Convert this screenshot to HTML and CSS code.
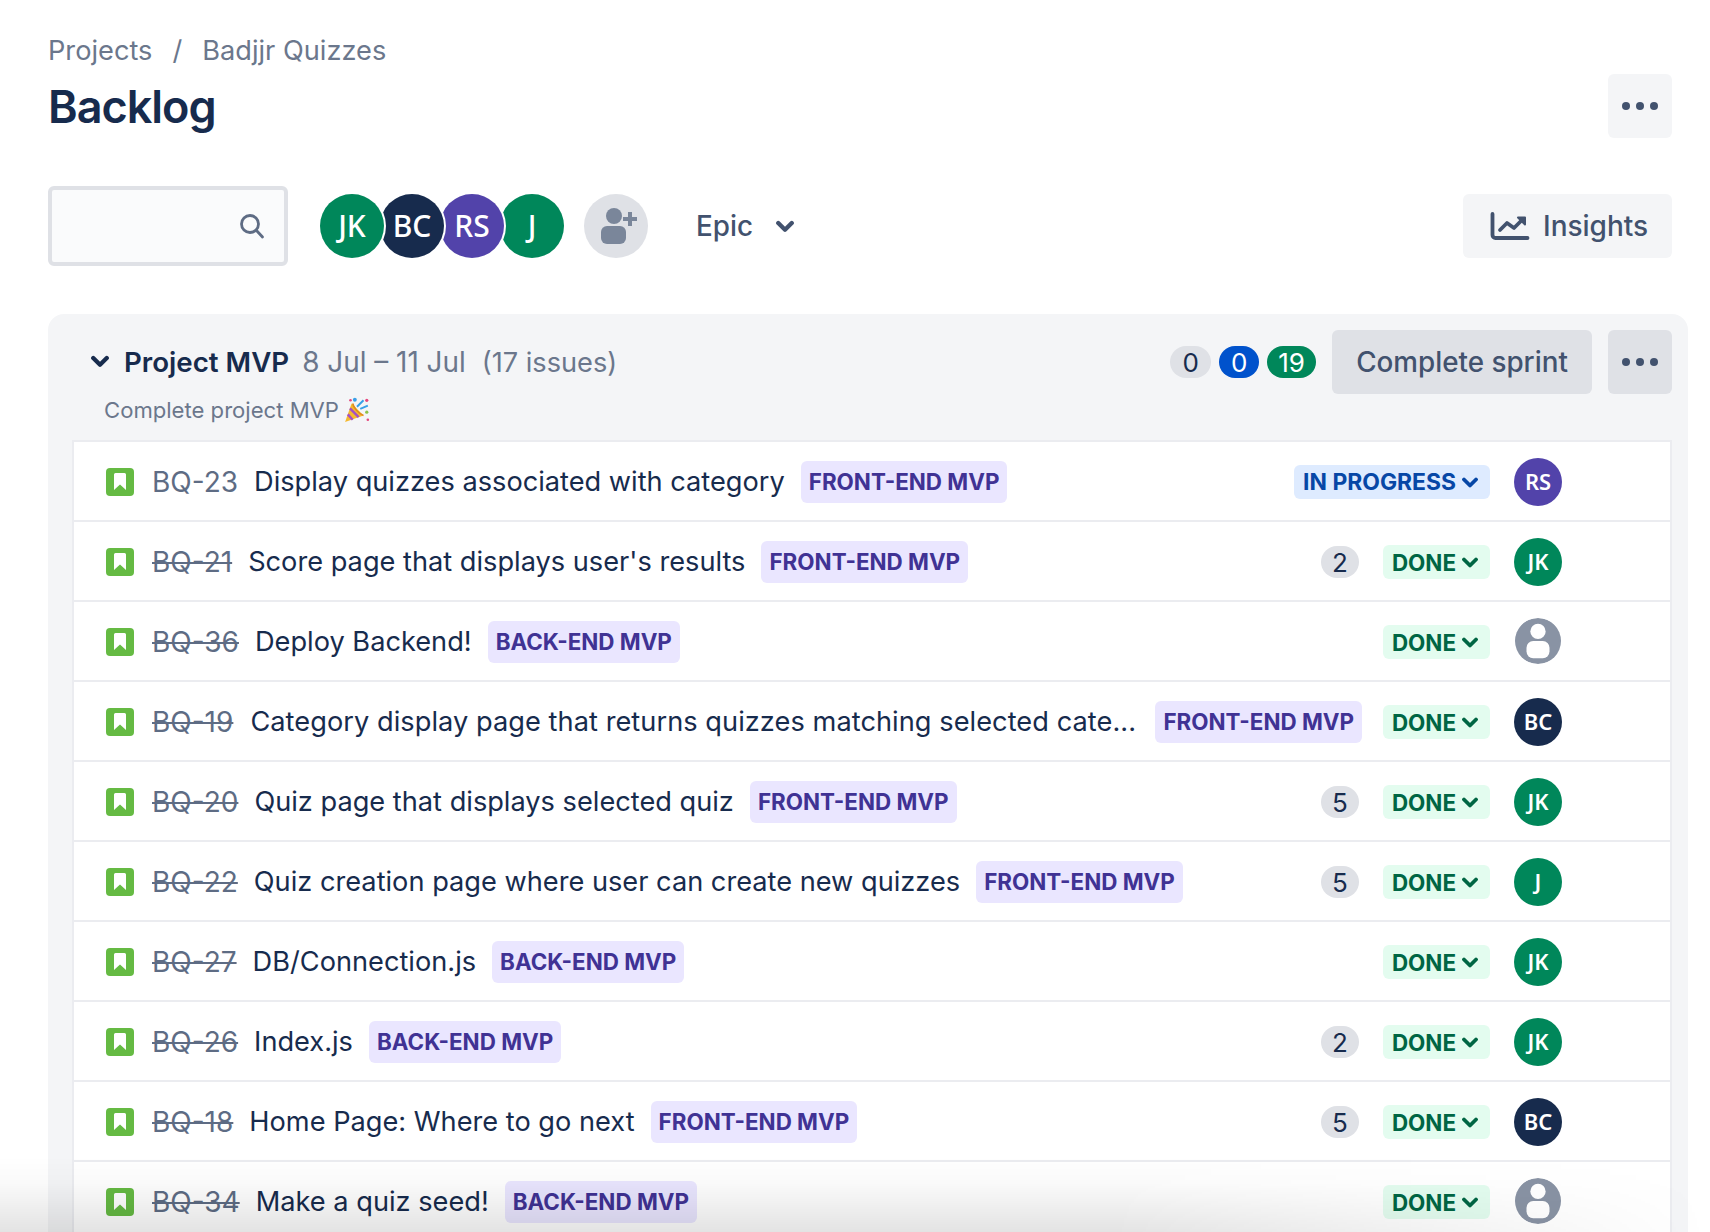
FILE: index.html
```html
<!DOCTYPE html>
<html lang="en">
<head>
    <meta charset="UTF-8">
    <title>Backlog - Badjjr Quizzes</title>
    <link rel="stylesheet" href="styles.css">
</head>
<body>

<svg class="defs" width="0" height="0">
    <symbol id="dots" viewBox="0 0 36 8"><circle cx="4" cy="4" r="4"/><circle cx="18" cy="4" r="4"/><circle cx="32" cy="4" r="4"/></symbol>
    <symbol id="story" viewBox="0 0 28 28"><rect width="28" height="28" rx="4" fill="#65ba43"/><path d="M9.5 5h9a1.5 1.5 0 0 1 1.500 1.500V22l-6-5.500L8 22V6.500A1.500 1.500 0 0 1 9.500 5z" fill="#fff"/></symbol>
    <symbol id="nobody" viewBox="0 0 48 48"><circle cx="24" cy="24" r="24" fill="#8993a4"/><circle cx="24" cy="14" r="8" fill="#fff"/><rect x="12" y="24" width="24" height="18" rx="7" fill="#fff"/></symbol>
    <symbol id="chev" viewBox="0 0 16 12"><path d="M2 2.500l6 6 6-6" fill="none" stroke="currentColor" stroke-width="3.800" stroke-linecap="round" stroke-linejoin="round"/></symbol>
</svg>

<header class="page-head">
    <nav class="crumbs"><span>Projects</span><span class="sep">/</span><span>Badjjr Quizzes</span></nav>
    <div class="title-row">
        <h1>Backlog</h1>
        <button class="btn btn-icon"><svg class="dots"><use href="#dots"/></svg></button>
    </div>
</header>

<div class="toolbar">
    <div class="search">
        <svg width="26" height="26" viewBox="0 0 26 26" fill="none" stroke="#5e6c84" stroke-width="2.800" stroke-linecap="round"><circle cx="11" cy="11" r="8.500"/><path d="M17.500 17.500l6 6.500"/></svg>
    </div>
    <div class="people">
        <span class="avatar-lg green">JK</span>
        <span class="avatar-lg navy">BC</span>
        <span class="avatar-lg purple">RS</span>
        <span class="avatar-lg green">J</span>
    </div>
    <span class="add-person">
        <svg width="64" height="64" viewBox="0 0 64 64" fill="#7a869a"><circle cx="30" cy="22" r="8"/><rect x="17" y="32" width="25" height="18" rx="6"/><path d="M44 18h4v5h5v4h-5v5h-4v-5h-5v-4h5z"/></svg>
    </span>
    <span class="epic">Epic <svg class="epic-chev"><use href="#chev"/></svg></span>
    <button class="btn btn-insights">
        <svg width="40" height="30" viewBox="0 0 40 30" fill="none" stroke="#42526e" stroke-width="3.800" stroke-linecap="round" stroke-linejoin="round"><path d="M2.500 3v21a3 3 0 0 0 3 3h32"/><path d="M10 19l7-7 7 5 9-9"/><path d="M28 6.500h7v7z" fill="#42526e" stroke-width="2"/></svg>
        Insights
    </button>
</div>

<section class="sprint">
    <div class="sprint-head">
        <svg class="sprint-chev"><use href="#chev"/></svg>
        <span class="sprint-name">Project MVP</span>
        <span class="sprint-dates sprint-range">8 Jul – 11 Jul</span>
        <span class="sprint-dates">(17 issues)</span>
        <div class="sprint-actions">
            <span class="pill">0</span>
            <span class="pill pill-blue">0</span>
            <span class="pill pill-green">19</span>
            <button class="btn btn-dark btn-complete">Complete sprint</button>
            <button class="btn btn-dark btn-icon"><svg class="dots"><use href="#dots"/></svg></button>
        </div>
    </div>
    <p class="goal">Complete project MVP
        <svg width="26" height="26" viewBox="0 0 24 24">
            <path d="M1 23L7 6l11 11z" fill="#f5b92e"/>
            <path d="M3.500 16l4.500 5M5.500 10.500l8 8" stroke="#a44fc4" stroke-width="2.200"/>
            <path d="M8 6c1 4 5 9 10 11" stroke="#e08a1e" stroke-width="1.500" fill="none"/>
            <path d="M12 9l6-6M15 11l7-3" stroke="#39a0e8" stroke-width="1.800"/>
            <circle cx="10" cy="2.500" r="1.800" fill="#39a0e8"/><circle cx="21" cy="3" r="1.500" fill="#e5487d"/>
            <circle cx="6" cy="3" r="1.200" fill="#e5487d"/><circle cx="21" cy="14" r="1.500" fill="#8bc34a"/><circle cx="22" cy="21" r="1.200" fill="#e5487d"/>
        </svg>
    </p>

    <div class="issues">
        <div class="issue">
            <svg class="story"><use href="#story"/></svg>
            <span class="key">BQ-23</span>
            <span class="summary">Display quizzes associated with category</span>
            <span class="epic-tag">FRONT-END MVP</span>
            <span class="status status-progress">IN PROGRESS <svg class="status-chev"><use href="#chev"/></svg></span>
            <span class="avatar purple">RS</span>
        </div>
        <div class="issue">
            <svg class="story"><use href="#story"/></svg>
            <span class="key done">BQ-21</span>
            <span class="summary">Score page that displays user's results</span>
            <span class="epic-tag">FRONT-END MVP</span>
            <span class="pill points">2</span>
            <span class="status">DONE <svg class="status-chev"><use href="#chev"/></svg></span>
            <span class="avatar green">JK</span>
        </div>
        <div class="issue">
            <svg class="story"><use href="#story"/></svg>
            <span class="key done">BQ-36</span>
            <span class="summary">Deploy Backend!</span>
            <span class="epic-tag">BACK-END MVP</span>
            <span class="status">DONE <svg class="status-chev"><use href="#chev"/></svg></span>
            <svg class="avatar"><use href="#nobody"/></svg>
        </div>
        <div class="issue">
            <svg class="story"><use href="#story"/></svg>
            <span class="key done">BQ-19</span>
            <span class="summary summary-cut">Category display page that returns quizzes matching selected cate...</span>
            <span class="epic-tag">FRONT-END MVP</span>
            <span class="status">DONE <svg class="status-chev"><use href="#chev"/></svg></span>
            <span class="avatar navy">BC</span>
        </div>
        <div class="issue">
            <svg class="story"><use href="#story"/></svg>
            <span class="key done">BQ-20</span>
            <span class="summary">Quiz page that displays selected quiz</span>
            <span class="epic-tag">FRONT-END MVP</span>
            <span class="pill points">5</span>
            <span class="status">DONE <svg class="status-chev"><use href="#chev"/></svg></span>
            <span class="avatar green">JK</span>
        </div>
        <div class="issue">
            <svg class="story"><use href="#story"/></svg>
            <span class="key done">BQ-22</span>
            <span class="summary">Quiz creation page where user can create new quizzes</span>
            <span class="epic-tag">FRONT-END MVP</span>
            <span class="pill points">5</span>
            <span class="status">DONE <svg class="status-chev"><use href="#chev"/></svg></span>
            <span class="avatar green">J</span>
        </div>
        <div class="issue">
            <svg class="story"><use href="#story"/></svg>
            <span class="key done">BQ-27</span>
            <span class="summary">DB/Connection.js</span>
            <span class="epic-tag">BACK-END MVP</span>
            <span class="status">DONE <svg class="status-chev"><use href="#chev"/></svg></span>
            <span class="avatar green">JK</span>
        </div>
        <div class="issue">
            <svg class="story"><use href="#story"/></svg>
            <span class="key done">BQ-26</span>
            <span class="summary">Index.js</span>
            <span class="epic-tag">BACK-END MVP</span>
            <span class="pill points">2</span>
            <span class="status">DONE <svg class="status-chev"><use href="#chev"/></svg></span>
            <span class="avatar green">JK</span>
        </div>
        <div class="issue">
            <svg class="story"><use href="#story"/></svg>
            <span class="key done">BQ-18</span>
            <span class="summary">Home Page: Where to go next</span>
            <span class="epic-tag">FRONT-END MVP</span>
            <span class="pill points">5</span>
            <span class="status">DONE <svg class="status-chev"><use href="#chev"/></svg></span>
            <span class="avatar navy">BC</span>
        </div>
        <div class="issue">
            <svg class="story"><use href="#story"/></svg>
            <span class="key done">BQ-34</span>
            <span class="summary">Make a quiz seed!</span>
            <span class="epic-tag">BACK-END MVP</span>
            <span class="status">DONE <svg class="status-chev"><use href="#chev"/></svg></span>
            <svg class="avatar"><use href="#nobody"/></svg>
        </div>
    </div>
</section>

<div class="fade"></div>

</body>
</html>
```

FILE: styles.css
```css
* {
    box-sizing: border-box;
}

html, body {
    height: 1232px;
    overflow: hidden;
}

body {
    margin: 0;
    padding: 35px 22px 0 48px;
    font-family: 'Inter', 'Liberation Sans', sans-serif;
    font-size: 27.2px;
    color: #172b4d;
    background-color: #fff;
    position: relative;
}

.defs {
    position: absolute;
}

button {
    font: inherit;
    border: 0;
    cursor: pointer;
}

/* page head */
.page-head {
    padding-right: 16px;
}

.crumbs {
    display: flex;
    gap: 20px;
    height: 32px;
    line-height: 32px;
    color: #6b778c;
}

.sep {
    color: #6b778c;
}

.title-row {
    display: flex;
    justify-content: space-between;
    align-items: center;
    margin-top: 7px;
    height: 64px;
}

h1 {
    margin: 2px 0 0;
    font-size: 45px;
    font-weight: 600;
    letter-spacing: -1px;
    line-height: 62px;
}

.btn {
    display: flex;
    align-items: center;
    justify-content: center;
    height: 64px;
    border-radius: 6px;
    background-color: #f4f5f7;
    color: #42526e;
    font-size: 27.8px;
}

.btn-icon {
    width: 64px;
    padding: 0;
}

.btn-dark {
    background-color: #dfe1e6;
}

.dots {
    width: 36px;
    height: 8px;
    fill: #42526e;
}

/* toolbar */
.toolbar {
    display: flex;
    align-items: center;
    height: 80px;
    margin-top: 48px;
    padding-right: 16px;
}

.search {
    display: flex;
    align-items: center;
    justify-content: flex-end;
    width: 240px;
    height: 80px;
    padding-right: 19px;
    background-color: #fafbfc;
    border: 4px solid #dfe1e6;
    border-radius: 6px;
}

.people {
    display: flex;
    margin-left: 32px;
}

.avatar-lg {
    display: flex;
    align-items: center;
    justify-content: center;
    width: 64px;
    height: 64px;
    padding-bottom: 2px;
    border-radius: 50%;
    font-family: 'Noto Sans', sans-serif;
    font-size: 30px;
    font-weight: 500;
    color: #fff;
    position: relative;
}

.avatar-lg + .avatar-lg {
    margin-left: -4px;
}

.avatar-lg:nth-child(1) { z-index: 4; box-shadow: 0 0 0 2px #fff; }
.avatar-lg:nth-child(2) { z-index: 3; box-shadow: 0 0 0 2px #fff; }
.avatar-lg:nth-child(3) { z-index: 2; box-shadow: 0 0 0 2px #fff; }
.avatar-lg:nth-child(4) { z-index: 1; }

.green { background-color: #00875a; }
.navy { background-color: #172b4d; }
.purple { background-color: #5243aa; }

.add-person {
    width: 64px;
    height: 64px;
    margin-left: 20px;
    border-radius: 50%;
    background-color: #dfe1e6;
}

.epic {
    display: flex;
    align-items: center;
    margin-left: 48px;
    color: #42526e;
    gap: 23px;
    font-size: 27.8px;
    font-weight: 500;
}

.epic-chev {
    width: 18px;
    height: 14px;
    margin-top: 2px;
    color: #42526e;
}

.btn-insights {
    margin-left: auto;
    width: 209px;
    padding-left: 27px;
    justify-content: flex-start;
    gap: 13px;
    font-size: 28px;
    font-weight: 500;
}

/* sprint */
.sprint {
    margin-top: 48px;
    height: 1000px;
    padding: 16px 16px 0 24px;
    background-color: #f4f5f7;
    border-radius: 16px 16px 0 0;
}

.sprint-head {
    display: flex;
    align-items: center;
    height: 64px;
    padding-left: 19px;
}

.sprint-chev {
    width: 18px;
    height: 14px;
    color: #172b4d;
    margin-right: 15px;
}

.sprint-name {
    font-size: 27.7px;
    font-weight: 600;
    margin-right: 13px;
}

.sprint-dates {
    color: #6b778c;
    margin-right: 16px;
}

.sprint-range {
    font-size: 27.9px;
}

.sprint-actions {
    display: flex;
    align-items: center;
    margin-left: auto;
    gap: 8px;
}

.pill {
    min-width: 40px;
    height: 32px;
    padding: 0 12px;
    border-radius: 16px;
    background-color: #dfe1e6;
    color: #172b4d;
    font-size: 26px;
    line-height: 33px;
    text-align: center;
}

.pill-blue {
    background-color: #0052cc;
    color: #fff;
}

.pill-green {
    background-color: #00875a;
    color: #fff;
    margin-right: 8px;
    padding: 0 11px;
}

.btn-complete {
    width: 260px;
    font-weight: 500;
    margin-right: 8px;
}

.goal {
    display: flex;
    align-items: center;
    gap: 5px;
    margin: 0 0 14px 32px;
    height: 32px;
    font-size: 22.1px;
    color: #6b778c;
}

.issues {
    border: 2px solid #ebecf0;
    border-bottom: 0;
    background-color: #fff;
}

.issue {
    display: flex;
    align-items: center;
    height: 80px;
    padding: 2px 108px 0 32px;
    border-bottom: 2px solid #ebecf0;
}

.story {
    flex: none;
    width: 28px;
    height: 28px;
    margin-right: 18px;
}

.key {
    color: #5e6c84;
    font-size: 28px;
    margin: 0 16px 1px 0;
}

.key.done {
    text-decoration: line-through;
}

.summary {
    white-space: nowrap;
    margin: 0 16px 1px 0;
}

.summary-cut {
    width: 885px;
    margin-left: 1px;
    margin-right: 20px;
    letter-spacing: 0.05px;
}

.epic-tag {
    height: 42px;
    line-height: 42px;
    padding: 0 8px;
    border-radius: 6px;
    background-color: #eae6ff;
    color: #403294;
    font-size: 22.4px;
    font-weight: 700;
    white-space: nowrap;
}

.points {
    width: 38px;
    min-width: 38px;
    padding: 0;
    margin-left: auto;
}

.status {
    display: flex;
    align-items: center;
    gap: 6px;
    height: 34px;
    padding: 0 12px 0 9px;
    border-radius: 6px;
    background-color: #e3fcef;
    color: #006644;
    font-size: 22.4px;
    font-weight: 700;
    white-space: nowrap;
    margin-left: 24px;
}

.epic-tag + .status {
    margin-left: auto;
}

.status-progress {
    background-color: #deebff;
    color: #0747a6;
    font-size: 22.9px;
}

.status-chev {
    width: 16px;
    height: 12px;
    margin-top: 2px;
}

.avatar {
    flex: none;
    display: flex;
    align-items: center;
    justify-content: center;
    width: 48px;
    height: 48px;
    margin-left: 24px;
    padding-bottom: 2px;
    border-radius: 50%;
    font-family: 'Noto Sans', sans-serif;
    font-size: 22px;
    font-weight: 600;
    color: #fff;
}

/* shadow along the bottom of the window, gone by the right edge */
.fade {
    position: absolute;
    left: 0;
    right: 0;
    bottom: 0;
    height: 76px;
    background: linear-gradient(to bottom, rgba(0, 0, 0, 0), rgba(0, 0, 0, 0.02) 35%, rgba(0, 0, 0, 0.11));
    -webkit-mask-image: linear-gradient(to right, #000 65%, transparent 100%);
    mask-image: linear-gradient(to right, #000 65%, transparent 100%);
    pointer-events: none;
}
```
